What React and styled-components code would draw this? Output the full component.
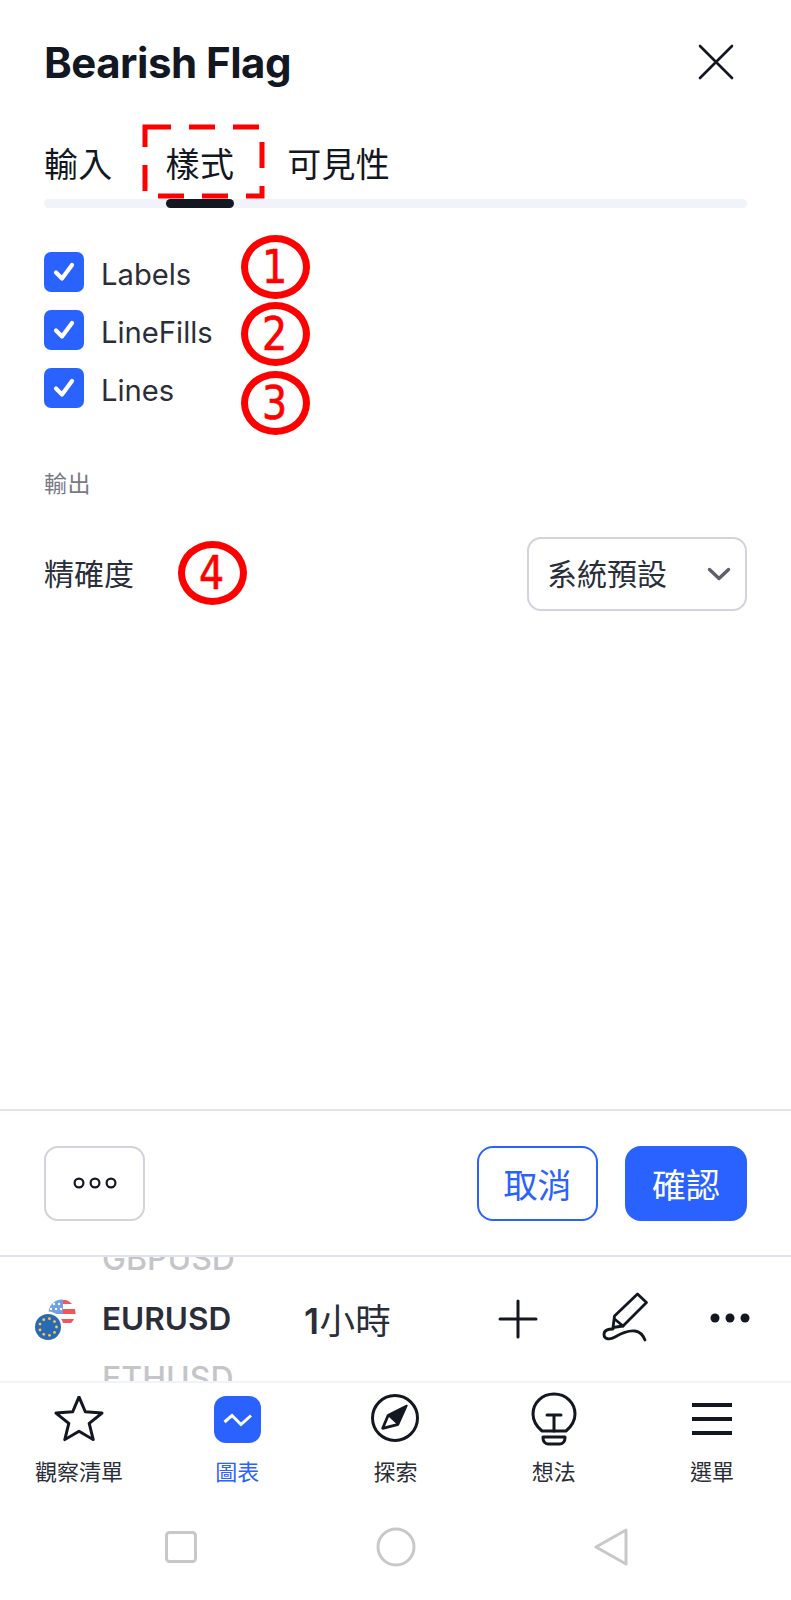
import React from "react";
import styled, { createGlobalStyle } from "styled-components";

const Global = createGlobalStyle`
  html, body { margin: 0; padding: 0; background: #fff; }
  * { box-sizing: border-box; }
`;
const Page = styled.div`
  position: relative; width: 791px; height: 1600px; overflow: hidden;
  display: flex; flex-direction: column; background: #fff; color: #131722;
  font-family: Inter, "Noto Sans CJK TC", sans-serif;
`;
const Panel = styled.section`flex: 1; min-height: 0; padding: 0 44px; display: flex; flex-direction: column;`;
const Header = styled.header`height: 124px; display: flex; align-items: center; justify-content: space-between; padding-right: 13px;`;
const Title = styled.h1`margin: 0; font-size: 42px; font-weight: 700; line-height: 50px; letter-spacing: -0.5px; transform: translateY(1px);`;
const TabBar = styled.nav`
  position: relative; height: 84px; display: flex; gap: 53px; padding-top: 21px;
  &::after { content: ""; position: absolute; left: 0; right: 0; bottom: 0; height: 9px; border-radius: 5px; background: #f0f3fa; }
`;
const Tab = styled.div`
  position: relative; font-size: 34px; line-height: 40px; height: 40px; color: #131722; letter-spacing: 0.3px;
  &::after { content: ""; display: ${p => (p.$active ? "block" : "none")}; position: absolute; z-index: 1; left: 0; right: 0; top: 54px; height: 9px; border-radius: 5px; background: #131722; }
`;
const Checks = styled.div`margin-top: 44px; display: flex; flex-direction: column; gap: 18px;`;
const CheckRow = styled.label`display: flex; align-items: center; gap: 17px; height: 40px;`;
const Box = styled.span`width: 40px; height: 40px; border-radius: 7px; background: #2962ff; display: flex; align-items: center; justify-content: center;`;
const CheckLabel = styled.span`font-size: 29.2px; line-height: 36px; color: #2a2e39; transform: translateY(3px);`;
const SectionLabel = styled.div`margin-top: 61px; font-size: 23px; line-height: 30px; color: #787b86; letter-spacing: 0.4px;`;
const FieldRow = styled.div`margin-top: 38px; display: flex; align-items: center; justify-content: space-between;`;
const FieldLabel = styled.span`font-size: 30px; line-height: 36px; color: #2a2e39;`;
const Select = styled.div`
  width: 220px; height: 74px; border: 2px solid #d1d4dc; border-radius: 14px;
  display: flex; align-items: center; justify-content: space-between; padding: 0 14px 4px 18px;
  font-size: 30px; color: #2a2e39;
`;
const Footer = styled.footer`
  height: 148px; flex: none; border-top: 2px solid #e0e3eb; border-bottom: 2px solid #e0e3eb;
  display: flex; align-items: center; gap: 27px; padding: 0 44px;
`;
const MoreButton = styled.div`width: 101px; height: 75px; margin-right: auto; border: 2px solid #d1d4dc; border-radius: 14px; display: flex; align-items: center; justify-content: center;`;
const ActionButton = styled.div`
  width: ${p => (p.$primary ? 122 : 121)}px; height: 75px; border-radius: 16px; border: 2px solid #2962ff;
  background: ${p => (p.$primary ? "#2962ff" : "#fff")}; color: ${p => (p.$primary ? "#fff" : "#2962ff")};
  display: flex; align-items: center; justify-content: center; font-size: 34px;
`;
const InstrumentBar = styled.div`height: 124px; flex: none; overflow: hidden; display: flex; align-items: center; padding: 0 41px 0 34px;`;
const FlagPair = styled.svg`flex: none; width: 42px; height: 46px; margin: 6px 26px 0 0;`;
const SymbolWheel = styled.div`width: 202px; flex: none; height: 180px; display: flex; flex-direction: column;`;
const SymbolName = styled.div`
  height: 60px; line-height: 60px;
  font-size: ${p => (p.$current ? 31.5 : 32)}px;
  font-weight: ${p => (p.$current ? 600 : 500)}; color: ${p => (p.$current ? "#2a2e39" : "#c4c5c9")};
  letter-spacing: 0;
`;
const Interval = styled.div`font-size: 35.5px; font-weight: 400; color: #2a2e39; letter-spacing: 0.4px; transform: translateY(-1px);`;
const IntervalCount = styled.span`font-weight: 600;`;
const BarActions = styled.div`margin-left: auto; display: flex; align-items: center; gap: 62px;`;
const BottomNav = styled.nav`height: 118px; flex: none; border-top: 2px solid #f0f3fa; padding-top: 9px; display: grid; grid-template-columns: repeat(5, 1fr);`;
const NavItem = styled.div`display: flex; flex-direction: column; align-items: center; color: ${p => (p.$active ? "#2962ff" : "#2a2e39")};`;
const NavIcon = styled.div`height: 54px; display: flex; align-items: center; justify-content: center;`;
const NavLabel = styled.span`margin-top: 13px; font-size: 22px; line-height: 26px;`;
const ChartTile = styled.div`width: 47px; height: 47px; border-radius: 12px; background: #2962ff; display: flex;`;
const SystemBar = styled.div`height: 101px; flex: none; padding-bottom: 6px; display: grid; grid-template-columns: repeat(3, 215px); justify-content: center; align-items: center; justify-items: center;`;
const DashFrame = styled.svg`position: absolute; left: 142px; top: 124px; width: 123px; height: 75px;`;
const Badge = styled.div`
  position: absolute; left: ${p => p.$x - 34.5}px; top: ${p => p.$y - 32}px; width: 69px; height: 64px;
  border: 7px solid #f00; border-radius: 50%; background: #fff; color: #f00;
  display: flex; align-items: center; justify-content: center;
  font-family: "DejaVu Sans", sans-serif; font-size: 46px; line-height: 1;
  -webkit-text-stroke: 0.7px #f00;
  span { display: block; transform: scaleX(0.86); }
`;

const Check = () => (
  <svg width="26" height="22" viewBox="0 0 26 22" fill="none" stroke="#fff" strokeWidth="4.2" strokeLinecap="round" strokeLinejoin="round">
    <path d="M5 11.5l6 6L21 4" />
  </svg>
);

export default function App() {
  return (
    <Page>
      <Global />
      <Panel>
        <Header>
          <Title>Bearish Flag</Title>
          <svg width="36" height="36" viewBox="0 0 36 36" stroke="#131722" strokeWidth="2.6" strokeLinecap="round"><path d="M2 2l32 32M34 2L2 34" /></svg>
        </Header>
        <TabBar>
          <Tab>輸入</Tab>
          <Tab $active>樣式</Tab>
          <Tab>可見性</Tab>
        </TabBar>
        <Checks>
          {["Labels", "LineFills", "Lines"].map(t => (
            <CheckRow key={t}><Box><Check /></Box><CheckLabel>{t}</CheckLabel></CheckRow>
          ))}
        </Checks>
        <SectionLabel>輸出</SectionLabel>
        <FieldRow>
          <FieldLabel>精確度</FieldLabel>
          <Select>
            系統預設
            <svg width="24" height="14" viewBox="0 0 24 14" fill="none" stroke="#5d606b" strokeWidth="3.4" strokeLinecap="round" strokeLinejoin="round" style={{ marginTop: 4 }}><path d="M2.5 2.5L12 11.5l9.5-9" /></svg>
          </Select>
        </FieldRow>
      </Panel>
      <Footer>
        <MoreButton>
          <svg width="44" height="14" viewBox="0 0 44 14" fill="none" stroke="#131722" strokeWidth="2.2"><circle cx="6" cy="7" r="4.4" /><circle cx="22" cy="7" r="4.4" /><circle cx="38" cy="7" r="4.4" /></svg>
        </MoreButton>
        <ActionButton>取消</ActionButton>
        <ActionButton $primary>確認</ActionButton>
      </Footer>
      <InstrumentBar>
        <FlagPair viewBox="0 0 42 46">
          <defs><clipPath id="us"><circle cx="28" cy="14" r="13.500" /></clipPath></defs>
          <g clipPath="url(#us)">
            <rect width="42" height="30" fill="#fff" />
            <rect x="12" y="0" width="17" height="15" fill="#6f9fe6" />
            <g fill="#fff">
              <circle cx="20" cy="5" r="1.200" /><circle cx="25" cy="5" r="1.200" /><circle cx="17" cy="10" r="1.200" /><circle cx="22" cy="10" r="1.200" /><circle cx="27" cy="10" r="1.200" />
            </g>
            <path d="M29 1h14v4H29zM29 10h14v5H29zM14 20h28v4H14z" fill="#f0565a" />
          </g>
          <circle cx="14" cy="28" r="15.500" fill="#fff" />
          <circle cx="14" cy="28" r="13" fill="#2a68b8" />
          <g fill="#f5d130">
            {[0,1,2,3,4,5,6,7,8].map(i => (
              <circle key={i} cx={14 + 8.5 * Math.cos(i * 0.698)} cy={28 + 8.5 * Math.sin(i * 0.698)} r="1.400" />
            ))}
          </g>
        </FlagPair>
        <SymbolWheel>
          <SymbolName>GBPUSD</SymbolName>
          <SymbolName $current>EURUSD</SymbolName>
          <SymbolName>ETHUSD</SymbolName>
        </SymbolWheel>
        <Interval><IntervalCount>1</IntervalCount>小時</Interval>
        <BarActions>
          <svg width="40" height="40" viewBox="0 0 40 40" stroke="#131722" strokeWidth="3" strokeLinecap="round"><path d="M20 2v36M2 20h36" /></svg>
          <svg width="48" height="50" viewBox="12 13 48 50" fill="none" stroke="#131722" strokeWidth="2.8" strokeLinecap="round" strokeLinejoin="round" style={{ marginTop: -4, marginLeft: 2, marginRight: -2 }}>
            <path d="M47.500 15l9 8.500L33 47l-10 1.500 1.500-11.500z" />
            <path d="M24.500 40l8.500 7" />
            <path d="M23 50c-5 0-9 1-9 5.500 0 5 6 5.500 11 2.500 6-3.500 13-7 20-6 5 .8 8 4 10 9" />
          </svg>
          <svg width="40" height="10" viewBox="0 0 40 10" fill="#131722" style={{ marginTop: -2 }}><circle cx="5" cy="5" r="4.500" /><circle cx="20" cy="5" r="4.500" /><circle cx="35" cy="5" r="4.500" /></svg>
        </BarActions>
      </InstrumentBar>
      <BottomNav>
        <NavItem>
          <NavIcon>
            <svg width="50" height="46" viewBox="0 0 50 46" fill="none" stroke="#131722" strokeWidth="3" strokeLinejoin="round"><path d="M25 2.500l6.300 15.500 16.700 1.300-12.800 10.700 4 17-14.200-8.800-14.200 8.800 4-17L2 19.300l16.700-1.300z" transform="translate(0 -1.500) scale(1 .96)" /></svg>
          </NavIcon>
          <NavLabel>觀察清單</NavLabel>
        </NavItem>
        <NavItem $active>
          <NavIcon>
            <ChartTile>
              <svg width="47" height="47" viewBox="0 0 47 47" fill="none" stroke="#fff" strokeWidth="3"><path d="M10.500 26l7.500-6.500 9 9 10-9" /></svg>
            </ChartTile>
          </NavIcon>
          <NavLabel>圖表</NavLabel>
        </NavItem>
        <NavItem>
          <NavIcon>
            <svg width="50" height="50" viewBox="0 0 50 50" fill="none" style={{ marginTop: -3 }}>
              <circle cx="25" cy="25" r="22.500" stroke="#131722" strokeWidth="3" />
              <path d="M36.700 12.700L18.300 22l10 9.300z" fill="#131722" stroke="#131722" strokeWidth="2" strokeLinejoin="round" />
              <path d="M18.300 22l-5.600 13.300 15.600-4" stroke="#131722" strokeWidth="2.800" strokeLinejoin="round" />
            </svg>
          </NavIcon>
          <NavLabel>探索</NavLabel>
        </NavItem>
        <NavItem>
          <NavIcon>
            <svg width="46" height="54" viewBox="0 0 46 54" fill="none" stroke="#131722" strokeWidth="3" strokeLinecap="round" strokeLinejoin="round">
              <path d="M11 39C5 34 2 29 2 22 2 11 11 2 23 2s21 9 21 20c0 7-3 12-9 17z" />
              <path d="M16 23h14M23 23v16" />
              <path d="M12 45h22v1c0 3-2 6-5 6H17c-3 0-5-3-5-6z" />
            </svg>
          </NavIcon>
          <NavLabel>想法</NavLabel>
        </NavItem>
        <NavItem>
          <NavIcon>
            <svg width="42" height="32" viewBox="0 0 42 32" fill="#131722"><rect x="1" y="0" width="40" height="4" /><rect x="1" y="14" width="40" height="4" /><rect x="1" y="28" width="40" height="4" /></svg>
          </NavIcon>
          <NavLabel>選單</NavLabel>
        </NavItem>
      </BottomNav>
      <SystemBar>
        <svg width="32" height="32" viewBox="0 0 32 32" fill="none" stroke="#c8c8c8" strokeWidth="3"><rect x="1.500" y="1.500" width="29" height="29" rx="3" /></svg>
        <svg width="40" height="40" viewBox="0 0 40 40" fill="none" stroke="#c8c8c8" strokeWidth="3"><circle cx="20" cy="20" r="18" /></svg>
        <svg width="34" height="38" viewBox="0 0 34 38" fill="none" stroke="#c8c8c8" strokeWidth="3" strokeLinejoin="round"><path d="M32 2v34L2 19z" /></svg>
      </SystemBar>
      <DashFrame viewBox="0 0 123 75" fill="none">
        <rect x="3" y="3" width="117" height="69" stroke="#f00" strokeWidth="5" strokeDasharray="26 18" />
      </DashFrame>
      <Badge $x={275} $y={267}><span>1</span></Badge>
      <Badge $x={275} $y={334}><span>2</span></Badge>
      <Badge $x={275} $y={403}><span>3</span></Badge>
      <Badge $x={212} $y={573}><span>4</span></Badge>
    </Page>
  );
}
